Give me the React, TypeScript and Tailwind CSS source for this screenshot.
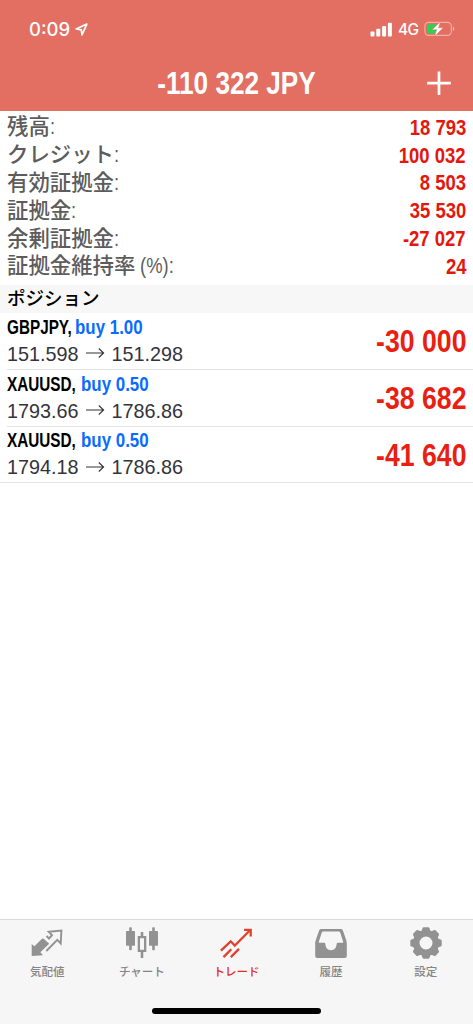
// Mobile trading screen: status bar, floating profit, account summary, open positions, tab bar.

import type { ReactNode } from "react";

type SummaryRow = {
  label: string;
  suffix: string;
  value: string;
};

type Position = {
  id: number;
  symbol: string;
  order: string;
  open: string;
  current: string;
  profit: string;
};

const summary: SummaryRow[] = [
  { label: "残高", suffix: ":", value: "18 793" },
  { label: "クレジット", suffix: ":", value: "100 032" },
  { label: "有効証拠金", suffix: ":", value: "8 503" },
  { label: "証拠金", suffix: ":", value: "35 530" },
  { label: "余剰証拠金", suffix: ":", value: "-27 027" },
  { label: "証拠金維持率", suffix: " (%):", value: "24" },
];

const positions: Position[] = [
  { id: 1, symbol: "GBPJPY", order: "buy 1.00", open: "151.598", current: "151.298", profit: "-30 000" },
  { id: 2, symbol: "XAUUSD", order: "buy 0.50", open: "1793.66", current: "1786.86", profit: "-38 682" },
  { id: 3, symbol: "XAUUSD", order: "buy 0.50", open: "1794.18", current: "1786.86", profit: "-41 640" },
];

function StatusBar() {
  return (
    <div className="flex h-[58px] items-center justify-between pl-[29px] pr-[18px]">
      <div className="flex items-center gap-[5px]">
        <span className="font-['Inter'] text-[18.5px] font-medium leading-none">0:09</span>
        <svg width="13" height="13" viewBox="0 0 13 13" fill="none">
          <path d="M11.8 1.1 1.2 5.9l5.1.9.7 5.1z" stroke="currentColor" strokeWidth="1.7" strokeLinejoin="round" />
        </svg>
      </div>
      <div className="flex items-center">
        <svg width="23" height="15" viewBox="0 0 23 15" fill="currentColor">
          <rect x="0.5" y="9.5" width="4" height="5" rx="1" />
          <rect x="6.3" y="6.8" width="4" height="7.7" rx="1" />
          <rect x="12.1" y="3.9" width="4" height="10.6" rx="1" />
          <rect x="17.9" y="0.7" width="4" height="13.8" rx="1" />
        </svg>
        <span className="ml-[5px] mt-[2px] w-[20px] whitespace-nowrap font-['Inter'] text-[15.5px] font-medium leading-none tracking-[-0.7px]">4G</span>
        <svg className="ml-[6px]" width="31" height="16" viewBox="0 0 31 16" fill="none">
          <rect x="0.9" y="1.4" width="26.4" height="13" rx="3.8" stroke="#fff" strokeOpacity="0.45" strokeWidth="1.1" />
          <path d="M28.8 5.6c1.9.6 1.9 4 0 4.6z" fill="#fff" fillOpacity="0.5" />
          <path d="M4.5 3.2h8v9.4h-8a1.6 1.6 0 0 1-1.6-1.6V4.8a1.6 1.6 0 0 1 1.6-1.6z" fill="#2bd352" />
          <path d="M16.5.5 8 8.8h4.6l-2 6.5 8.7-8.5h-4.7z" fill="#fff" stroke="#e36e62" strokeWidth="0.5" />
        </svg>
      </div>
    </div>
  );
}

function Header() {
  return (
    <header className="h-[111px] shrink-0 bg-[#e36e62] text-white">
      <StatusBar />
      <div className="grid h-[50px] grid-cols-[60px_1fr_60px] items-center">
        <span />
        <h1 className="mt-[2px] scale-x-[0.83] whitespace-nowrap text-center text-[31.5px] font-bold leading-none">-110 322 JPY</h1>
        <svg className="ml-[13px]" width="26" height="26" viewBox="0 0 26 26" stroke="currentColor" strokeWidth="2.7">
          <path d="M1.2 13.2h23.6M13 1.4v23.6" />
        </svg>
      </div>
    </header>
  );
}

function PositionItem({ position }: { position: Position }) {
  return (
    <li className="ml-[7px] flex h-[56.8px] items-center justify-between border-b border-[#e4e4e5] pr-[7px] last:ml-0 last:pl-[7px]">
      <div>
        <p className="flex h-[27px] whitespace-nowrap text-[20px] font-bold leading-[27px] text-black">
          <span className="-mr-[16.5px] origin-left scale-x-[0.765]">{position.symbol},</span>
          <span className="origin-left scale-x-[0.845] text-[#0a6cff]">{position.order}</span>
        </p>
        <p className="flex h-[27px] items-center text-[19.8px] leading-[27px] text-[#33333b]">
          {position.open}
          <svg className="mx-[7px] -mt-[2px]" width="19" height="12" viewBox="0 0 19 12" fill="none" stroke="currentColor" strokeWidth="1.1">
            <path d="M0 6h17.5M12.8 1.5 17.6 6l-4.8 4.5" />
          </svg>
          {position.current}
        </p>
      </div>
      <span className="mt-[3px] origin-right scale-x-[0.865] text-[30.8px] font-bold leading-none text-[#e81f12]">{position.profit}</span>
    </li>
  );
}

function QuotesIcon() {
  return (
    <svg width="32" height="32" viewBox="0 0 32 32" fill="none">
      <path d="M.7 16.9 3.4 19.2 11 11.8Q12 11 13 11.900L18.200 16.800 9.400 25.200 12 28.300.7 29z" fill="#929292" />
      <path d="M15.5 9 18 11.5 21 8.2 17.7 4.7 30.4 3.6 29.700 16.400 26.300 12.800 15.300 24" stroke="#929292" strokeWidth="1.9" />
    </svg>
  );
}

function ChartIcon() {
  return (
    <svg width="32" height="32" viewBox="0 0 32 32" fill="#929292">
      <rect x="0" y="4" width="9" height="14.7" rx="0.8" />
      <rect x="3.2" y="0.3" width="2.6" height="23" rx="0.8" />
      <rect x="23" y="4" width="9" height="14.7" rx="0.8" />
      <rect x="26.2" y="0.3" width="2.6" height="23" rx="0.8" />
      <path d="M14.7 5h2.6v4h3v16h-3v6h-2.6v-6h-3V9h3zM14 11.2v11.6h4V11.2z" fillRule="evenodd" />
    </svg>
  );
}

function TradeIcon() {
  return (
    <svg width="32" height="32" viewBox="0 0 32 32" fill="none" stroke="#e0412f" strokeWidth="2.3">
      <path d="M.9 23.6 10.7 14.3 14.8 18.5 29.5 3.7" />
      <path d="M24 2.8h6.7v6.8" />
      <path d="M3.5 30.1l7.8-7.8M10.8 30.1l8.2-8.2" />
    </svg>
  );
}

function HistoryIcon() {
  return (
    <svg width="32" height="32" viewBox="0 0 32 32">
      <path
        d="M6.4 2h19.2c1.200 0 2 .7 2.400 1.700l3 8.800c.6 1.700.8 3 .8 4.800v11.600c0 1.200-.8 2-2 2H2.200c-1.200 0-2-.8-2-2V17.300c0-1.800.2-3.100.8-4.800l3-8.800C4.400 2.700 5.200 2 6.400 2zM8.200 4.600c-.7 0-1.200.3-1.400 1L3.900 14.400c-.3.900 0 1.400.9 1.400h4.700c.5 0 .8.300.8.900.2 3.700 2.300 6.500 5.700 6.500s5.500-2.800 5.700-6.500c0-.6.3-.9.8-.9h4.700c.9 0 1.200-.5.9-1.400L25.200 5.600c-.2-.7-.7-1-1.400-1z"
        fill="#929292"
        fillRule="evenodd"
      />
    </svg>
  );
}

function SettingsIcon() {
  return (
    <svg width="32" height="32" viewBox="-16 -16 32 32" fill="#929292">
      <circle r="9.7" fill="none" stroke="#929292" strokeWidth="6.4" />
      {[0, 45, 90, 135, 180, 225, 270, 315].map((angle) => (
        <path key={angle} d="M-5.5-11Q-3.9-12.5-3.6-14.5Q-3.3-15.7-2.2-15.7H2.2Q3.3-15.7 3.6-14.5Q3.9-12.5 5.5-11z" transform={`rotate(${angle})`} />
      ))}
    </svg>
  );
}

type TabProps = {
  label: string;
  icon: ReactNode;
  active?: boolean;
};

function Tab({ label, icon, active = false }: TabProps) {
  return (
    <button className={`flex flex-1 flex-col items-center pt-[7px] ${active ? "text-[#e12d20]" : "text-[#858585]"}`}>
      {icon}
      <span className="mt-[4px] whitespace-nowrap text-[11.5px] font-medium leading-[18px]">{label}</span>
    </button>
  );
}

function App() {
  return (
    <div className="flex h-[1024px] w-full flex-col overflow-hidden bg-white font-['Liberation_Sans','Noto_Sans_CJK_JP',sans-serif]">
      <Header />

      {/* Account summary */}
      <dl className="h-[174px] shrink-0 pt-[2.5px]">
        {summary.map((row) => (
          <div key={row.label} className="flex h-[27.8px] items-center justify-between px-[7px]">
            <dt className="flex items-center pt-[1px] text-[21.4px] font-medium leading-[27px] text-[#5c5c5c]">
              {row.label}
              <span className="origin-left scale-x-[0.86] whitespace-pre">{row.suffix}</span>
            </dt>
            <dd className="origin-right scale-x-[0.84] text-[22px] font-bold leading-[27px] text-[#e3170c]">{row.value}</dd>
          </div>
        ))}
      </dl>

      {/* Open positions */}
      <h2 className="flex h-[28px] shrink-0 items-center bg-[#f7f7f7] pl-[7px] text-[18.5px] font-medium text-black">ポジション</h2>
      <ul className="flex-1">
        {positions.map((position) => (
          <PositionItem key={position.id} position={position} />
        ))}
      </ul>

      <footer className="flex h-[105px] shrink-0 flex-col border-t border-[#dadada] bg-[#f6f6f6]">
        <nav className="flex h-[87.5px]">
          <Tab label="気配値" icon={<QuotesIcon />} />
          <Tab label="チャート" icon={<ChartIcon />} />
          <Tab label="トレード" icon={<TradeIcon />} active />
          <Tab label="履歴" icon={<HistoryIcon />} />
          <Tab label="設定" icon={<SettingsIcon />} />
        </nav>
        <div className="mx-auto h-[6px] w-[169px] rounded-full bg-black" />
      </footer>
    </div>
  );
}

export default App;
